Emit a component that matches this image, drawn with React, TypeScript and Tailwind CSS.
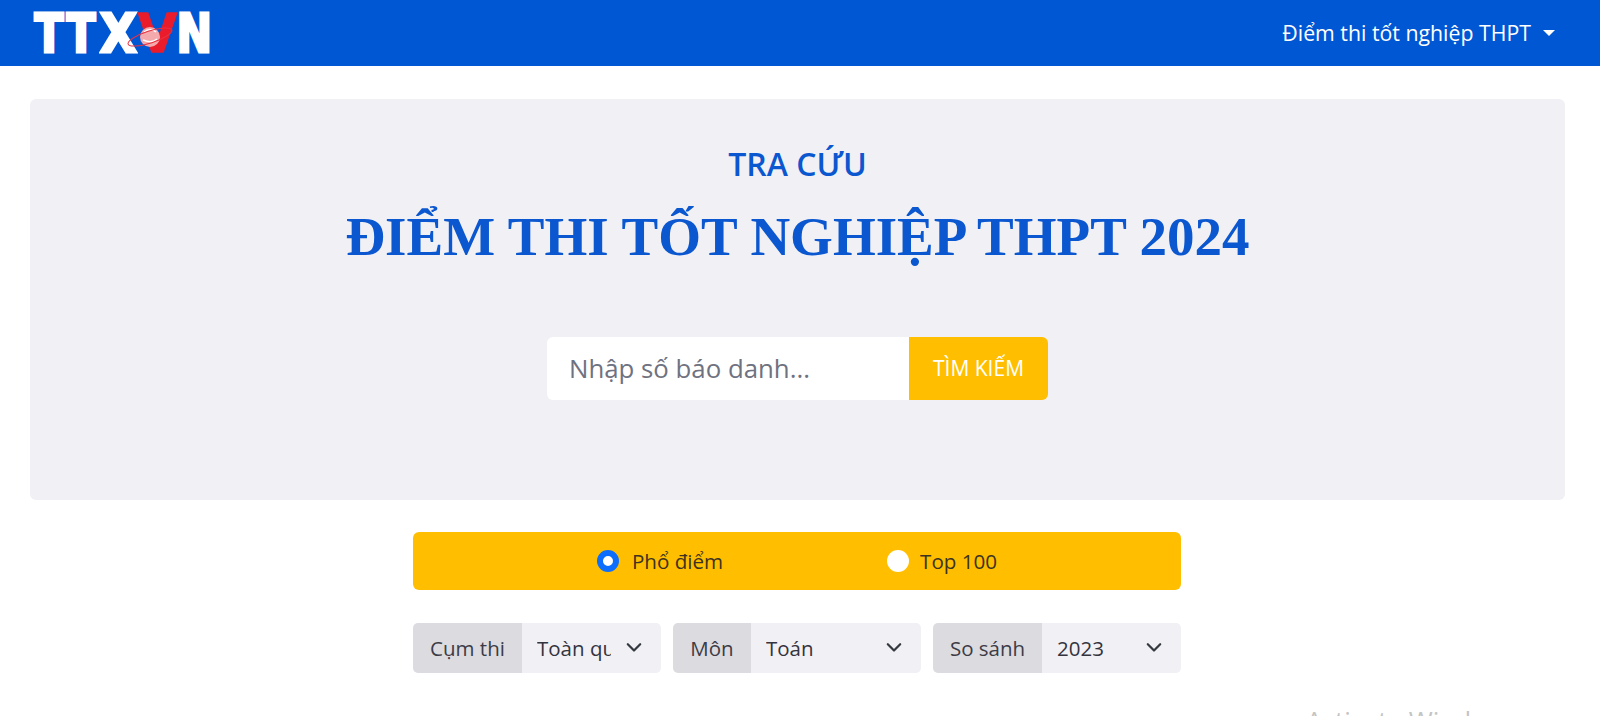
import React from "react";

const Chevron = () => (
  <svg className="pointer-events-none absolute right-[18px] top-1/2 -translate-y-[55%]" width="18" height="18" viewBox="0 0 16 16" fill="none">
    <path d="M2.5 5.5 8 11l5.5-5.5" stroke="#343a40" strokeWidth="2" strokeLinecap="round" strokeLinejoin="round" />
  </svg>
);

const Group = ({ label, labelW, value, options }: { label: string; labelW: string; value: string; options: string[] }) => (
  <div className="flex h-[50px] flex-1 overflow-hidden rounded-[5px]">
    <span className={`flex shrink-0 items-center justify-center bg-[#dcdbe0] text-[20.5px] text-[#3c3c46] ${labelW}`}>{label}</span>
    <div className="relative min-w-0 flex-1 bg-[#f1f0f5]">
      <select defaultValue={value} className="h-full w-full appearance-none bg-transparent pl-[15px] pr-[50px] text-[20.5px] text-[#34343e] outline-none">
        {options.map((o) => (
          <option key={o}>{o}</option>
        ))}
      </select>
      <Chevron />
    </div>
  </div>
);

const L = ({ c, w, s, red }: { c: string; w: string; s: string; red?: boolean }) => (
  <span className={`flex shrink-0 justify-center ${w}`}>
    <span className={`${s} ${red ? "text-[#ea1c2c] [-webkit-text-stroke:1.5px_#ea1c2c]" : "text-white [-webkit-text-stroke:3px_white]"}`}>{c}</span>
  </span>
);

export default function App() {
  return (
    <div className="relative h-[716px] overflow-hidden bg-white font-['Open_Sans','Noto_Sans',sans-serif]">
      <header className="flex h-[66px] items-center justify-between bg-[#0057d4] pl-[33px] pr-[45px]">
        <div className="relative flex h-[44px] w-[180px] items-center font-['DejaVu_Sans',sans-serif] text-[53px] font-bold leading-none">
          <L c="T" w="w-[32px]" s="scale-x-[.8]" />
          <L c="T" w="w-[32px]" s="scale-x-[.8]" />
          <L c="X" w="w-[42px]" s="scale-x-[.9]" />
          <L c="V" w="w-[37px]" s="scale-x-[.95]" red />
          <L c="N" w="w-[37px]" s="scale-x-[.8]" />
          <svg className="absolute left-[94px] top-[13px]" width="46" height="30" viewBox="0 0 46 30" fill="none">
            <circle cx="23" cy="13" r="10" fill="#f4a9ad" />
            <path d="M17 8c4-3 9-3 12 0M16 16c5 2 10 3 14-1" stroke="#fff" strokeWidth="1.5" />
            <ellipse cx="23" cy="13" rx="23" ry="6" transform="rotate(-18 23 13)" stroke="#e8303f" strokeWidth="1" />
          </svg>
        </div>
        <button className="flex items-center gap-[12px] text-[21.3px] text-white">
          Điểm thi tốt nghiệp THPT
          <span className="h-0 w-0 border-x-[6px] border-t-[6px] border-x-transparent border-t-white" />
        </button>
      </header>

      <main className="pl-[30px] pr-[35px] pt-[33px]">
        <section className="flex h-[401px] flex-col items-center rounded-[6px] bg-[#f1f0f5] pt-[45px]">
          <h2 className="text-[32px] font-semibold leading-[40px] text-[#0b57cf]">TRA CỨU</h2>
          <h1 className="mt-[18px] whitespace-nowrap font-['Liberation_Serif',serif] text-[55px] font-bold leading-[70px] text-[#0b57cf]">
            ĐIỂM THI TỐT NGHIỆP THPT 2024
          </h1>
          <div className="mt-[65px] flex h-[63px] w-[501px] overflow-hidden rounded-[6px]">
            <input
              placeholder="Nhập số báo danh..."
              className="min-w-0 flex-1 bg-white pl-[22px] text-[25.8px] text-[#333] outline-none placeholder:text-[#6f7280]"
            />
            <button className="w-[139px] bg-[#ffbf00] text-[21px] text-white">TÌM KIẾM</button>
          </div>
        </section>

        <section className="ml-[383px] mt-[32px] w-[768px]">
          <div className="flex h-[58px] items-center justify-center gap-[164px] rounded-[6px] bg-[#ffbf00] text-[20.6px] text-[#3d3320]">
            <label className="flex items-center gap-[13px]">
              <input type="radio" name="view" defaultChecked className="h-[22px] w-[22px] appearance-none rounded-full border-[6px] border-[#0d6efd] bg-white" />
              Phổ điểm
            </label>
            <label className="flex items-center gap-[11px]">
              <input type="radio" name="view" className="h-[22px] w-[22px] appearance-none rounded-full bg-white" />
              Top 100
            </label>
          </div>
          <div className="mt-[33px] flex gap-[12px]">
            <Group label="Cụm thi" labelW="w-[109px]" value="Toàn quốc" options={["Toàn quốc"]} />
            <Group label="Môn" labelW="w-[78px]" value="Toán" options={["Toán"]} />
            <Group label="So sánh" labelW="w-[109px]" value="2023" options={["2023"]} />
          </div>
        </section>
      </main>

      <span className="absolute left-[1306px] top-[705px] whitespace-nowrap text-[26px] leading-[30px] text-[#c4c4c4]">Activate Windows</span>
    </div>
  );
}
